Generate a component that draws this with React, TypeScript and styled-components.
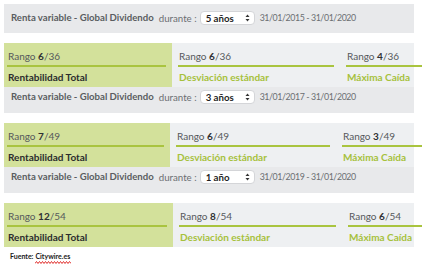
import styled, { createGlobalStyle } from "styled-components";

const GlobalStyle = createGlobalStyle`
  html, body {
    margin: 0;
    padding: 0;
    background: #ffffff;
    overflow: hidden;
  }
  body {
    font-family: Lato, "Liberation Sans", sans-serif;
  }
`;

const Page = styled.div`
  width: 410px;
  padding: 4px 0 0 4px;
`;

const Header = styled.div<{ $h: number; $pb: number }>`
  display: flex;
  align-items: center;
  height: ${(p) => p.$h}px;
  padding: 0 0 ${(p) => p.$pb}px 7px;
  box-sizing: border-box;
  background: #e8e9eb;
  font-size: 9.7px;
  color: #6b6e72;
  white-space: nowrap;
`;

const Fund = styled.span`
  font-weight: 700;
  font-size: 9.6px;
  color: #5a5d61;
  margin-right: 5px;
`;

const During = styled.span`
  margin-right: 3px;
`;

const Period = styled.div`
  display: flex;
  align-items: center;
  justify-content: space-between;
  width: 55px;
  height: 14px;
  box-sizing: border-box;
  padding: 0 4px 0 5px;
  margin-right: 5px;
  background: #ffffff;
  border: 1px solid #d4d5d8;
  border-radius: 4px;
  font-weight: 700;
  color: #1f1f1f;
`;

const Dates = styled.span`
  font-size: 8.8px;
  letter-spacing: -0.4px;
  color: #6b6e72;
`;

const Stats = styled.div`
  display: flex;
  width: 410px;
  height: 44px;
  margin-top: 10px;
  background: #eef0f2;
`;

const Cell = styled.div<{ $w: number; $first?: boolean }>`
  flex: 0 0 ${(p) => p.$w}px;
  box-sizing: border-box;
  padding: 0 6px 0 ${(p) => (p.$first ? 3 : 6)}px;
  background: ${(p) => (p.$first ? "#d3e19b" : "transparent")};
  display: flex;
  flex-direction: column;
`;

const Rank = styled.div`
  height: 21px;
  line-height: 26px;
  padding-left: 1px;
  font-size: 10px;
  color: #55585c;
  b {
    color: #2f3033;
  }
`;

const Bar = styled.div`
  height: 2px;
  margin-top: 1px;
  background: #a9c43f;
`;

const Metric = styled.div<{ $first?: boolean }>`
  padding-left: 1px;
  line-height: 20px;
  font-size: 10px;
  font-weight: 700;
  color: ${(p) => (p.$first ? "#2b2c2e" : "#a6c13c")};
`;

const Source = styled.div`
  display: flex;
  align-items: flex-start;
  gap: 2px;
  margin: 5px 0 0 6px;
  font-size: 7px;
  line-height: 9px;
  font-weight: 700;
  color: #1a1a1a;
`;

const Misspelled = styled.span`
  display: flex;
  flex-direction: column;
`;

const Arrows = () => (
  <svg width="5" height="8" viewBox="0 0 5 8">
    <path d="M2.5 0.5 L4.5 3 L0.5 3 Z" fill="#333" />
    <path d="M2.5 7.5 L4.5 5 L0.5 5 Z" fill="#333" />
  </svg>
);

const Squiggle = () => (
  <svg width="36" height="3" viewBox="0 0 36 3" style={{ display: "block" }}>
    <polyline
      points="0,2.5 1.5,0.5 3,2.5 4.5,0.5 6,2.5 7.5,0.5 9,2.5 10.5,0.5 12,2.5 13.5,0.5 15,2.5 16.5,0.5 18,2.5 19.5,0.5 21,2.5 22.5,0.5 24,2.5 25.5,0.5 27,2.5 28.5,0.5 30,2.5 31.5,0.5 33,2.5 34.5,0.5 36,2.5"
      fill="none"
      stroke="#e0312f"
      strokeWidth="1"
    />
  </svg>
);

type Block = {
  period: string;
  dates: string;
  h: number;
  pb: number;
  w: number;
  ranks: [string, string][];
};

const metrics = ["Rentabilidad Total", "Desviación estándar", "Máxima Caída"];

const blocks: Block[] = [
  {
    period: "5 años",
    dates: "31/01/2015 - 31/01/2020",
    h: 29,
    pb: 2,
    w: 168,
    ranks: [["6", "36"], ["6", "36"], ["4", "36"]],
  },
  {
    period: "3 años",
    dates: "31/01/2017 - 31/01/2020",
    h: 26,
    pb: 7,
    w: 166,
    ranks: [["7", "49"], ["6", "49"], ["3", "49"]],
  },
  {
    period: "1 año",
    dates: "31/01/2019 - 31/01/2020",
    h: 26,
    pb: 7,
    w: 169,
    ranks: [["12", "54"], ["8", "54"], ["6", "54"]],
  },
];

const App = () => {
  return (
    <>
      <GlobalStyle />
      <Page>
        {blocks.map((b, i) => (
          <div key={i}>
            <Header $h={b.h} $pb={b.pb}>
              <Fund>Renta variable - Global Dividendo</Fund>
              <During>durante :</During>
              <Period>
                {b.period}
                <Arrows />
              </Period>
              <Dates>{b.dates}</Dates>
            </Header>
            <Stats>
              {b.ranks.map(([n, t], j) => (
                <Cell key={j} $w={b.w} $first={j === 0}>
                  <Rank>
                    Rango <b>{n}</b>/{t}
                  </Rank>
                  <Bar />
                  <Metric $first={j === 0}>{metrics[j]}</Metric>
                </Cell>
              ))}
            </Stats>
          </div>
        ))}
        <Source>
          <span>Fuente:</span>
          <Misspelled>
            Citywire.es
            <Squiggle />
          </Misspelled>
        </Source>
      </Page>
    </>
  );
};

export default App;
